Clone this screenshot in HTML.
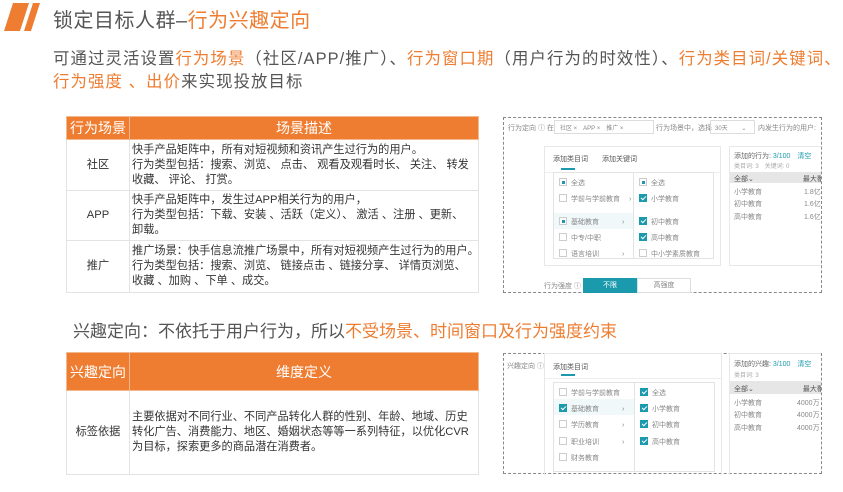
<!DOCTYPE html>
<html><head><meta charset="utf-8"><style>
*{margin:0;padding:0;box-sizing:border-box}
body{width:843px;height:492px;background:#fff;position:relative;overflow:hidden;font-family:"Liberation Sans","Noto Sans CJK SC",sans-serif;color:#555}
.a{position:absolute;white-space:nowrap}
.o{color:#ee7d31}
table{border-collapse:collapse;position:absolute;font-size:11.2px;color:#333;table-layout:fixed}
td{border:1px solid #e3e3e3;line-height:15px;white-space:nowrap;overflow:hidden;padding:0}
th{background:#ef7d31;color:#fff;font-weight:normal;font-size:14px;border:1px solid #f3b88d;white-space:nowrap;padding:0}
.box{position:absolute;border:1px dashed #888;font-size:7px;color:#888}
.cb{position:absolute;width:8px;height:8px;border:1px solid #ccc;background:#fff}
.ck{background:#1a9aac;border-color:#1a9aac}
.ck::after{content:"";position:absolute;left:2px;top:0px;width:2px;height:4px;border:solid #fff;border-width:0 1px 1px 0;transform:rotate(45deg)}
.hf{border-color:#ccc}
.hf::after{content:"";position:absolute;left:2px;top:2px;width:3px;height:3px;background:#1a9aac}
</style></head><body>
<svg class="a" style="left:0;top:0" width="50" height="36"><polygon points="13,3 29,3 20,31 4,31" fill="#ef7d31"/><polygon points="33,3 40,3 31,31 24,31" fill="#ef7d31"/></svg>
<div class="a" style="left:53px;top:4px;font-size:20px;color:#555;letter-spacing:0.5px">锁定目标人群–<span class="o">行为兴趣定向</span></div>
<div class="a" style="left:53px;top:48px;font-size:16.4px;line-height:23px;letter-spacing:1.1px">可通过灵活设置<span class="o">行为场景</span>（社区/APP/推广）、<span class="o">行为窗口期</span>（用户行为的时效性）、<span class="o">行为类目词/关键词、</span><br><span class="o">行为强度 、出价</span>来实现投放目标</div>

<table style="left:66px;top:116px;width:412px">
<colgroup><col style="width:63px"><col style="width:349px"></colgroup>
<tr style="height:23px"><th>行为场景</th><th>场景描述</th></tr>
<tr style="height:51px"><td style="text-align:center">社区</td><td style="padding-left:2px">快手产品矩阵中，所有对短视频和资讯产生过行为的用户。<br>行为类型包括：搜索、浏览、 点击、 观看及观看时长、 关注、 转发<br>收藏、 评论、 打赏。</td></tr>
<tr style="height:50px"><td style="text-align:center">APP</td><td style="padding-left:2px">快手产品矩阵中，发生过APP相关行为的用户，<br>行为类型包括：下载、安装 、活跃（定义）、 激活 、注册 、更新、<br>卸载。</td></tr>
<tr style="height:52px"><td style="text-align:center">推广</td><td style="padding-left:2px">推广场景：快手信息流推广场景中，所有对短视频产生过行为的用户。<br>行为类型包括：搜索、浏览、 链接点击 、链接分享、 详情页浏览、<br>收藏 、加购 、下单 、成交。</td></tr>
</table>

<div class="a" style="left:73px;top:317px;font-size:17px">兴趣定向：不依托于用户行为，所以<span class="o">不受场景、时间窗口及行为强度约束</span></div>

<table style="left:66px;top:352px;width:412px">
<colgroup><col style="width:63px"><col style="width:349px"></colgroup>
<tr style="height:38px"><th>兴趣定向</th><th>维度定义</th></tr>
<tr style="height:84px"><td style="text-align:center">标签依据</td><td style="padding-left:2px">主要依据对不同行业、不同产品转化人群的性别、年龄、地域、历史<br>转化广告、消费能力、地区、婚姻状态等等一系列特征，以优化CVR<br>为目标，探索更多的商品潜在消费者。</td></tr>
</table>

<!-- box1 -->
<div class="box" style="left:503px;top:117px;width:319px;height:176px">
 <div class="a" style="left:4px;top:5px">行为定向 ⓘ 在</div>
 <div class="a" style="left:50px;top:2px;width:100px;height:14px;border:1px solid #ddd;padding:2px 5px;font-size:6px">社区 ×　APP ×　推广 ×</div>
 <div class="a" style="left:152px;top:5px">行为场景中，选择</div>
 <div class="a" style="left:206px;top:2px;width:45px;height:14px;border:1px solid #ddd;padding:2px 4px;font-size:6px">30天 　　⌄</div>
 <div class="a" style="left:254px;top:5px">内发生行为的用户:</div>
 <div class="a" style="left:40px;top:28px;width:177px;height:120px;border:1px solid #e8e8e8">
  <div class="a" style="left:8px;top:7px;color:#555">添加类目词　　添加关键词</div>
  <div class="a" style="left:16px;top:21px;width:14px;height:2px;background:#1a9aac"></div>
  <div class="a" style="left:0;top:25px;width:175px;border-top:1px solid #eee"></div>
  <div class="a" style="left:8px;top:25px;width:161px;height:87px;border:1px solid #e3e3e3">
   <div class="a" style="left:79px;top:0;height:85px;border-left:1px solid #e3e3e3"></div>
   <div class="a" style="left:0;top:40px;width:79px;height:16px;background:#f0f8f9"></div>
   <div class="cb hf" style="left:5px;top:5px"></div><div class="a" style="left:17px;top:5px">全选</div>
   <div class="cb" style="left:5px;top:21px"></div><div class="a" style="left:17px;top:21px">学前与学前教育　 ›</div>
   <div class="cb hf" style="left:5px;top:44px"></div><div class="a" style="left:17px;top:44px">基础教育　　　 ›</div>
   <div class="cb" style="left:5px;top:60px"></div><div class="a" style="left:17px;top:60px">中专/中职</div>
   <div class="cb" style="left:5px;top:76px"></div><div class="a" style="left:17px;top:76px">语言培训　　　 ›</div>
   <div class="cb hf" style="left:85px;top:5px"></div><div class="a" style="left:97px;top:5px">全选</div>
   <div class="cb ck" style="left:85px;top:21px"></div><div class="a" style="left:97px;top:21px">小学教育</div>
   <div class="cb ck" style="left:85px;top:44px"></div><div class="a" style="left:97px;top:44px">初中教育</div>
   <div class="cb ck" style="left:85px;top:60px"></div><div class="a" style="left:97px;top:60px">高中教育</div>
   <div class="cb" style="left:85px;top:76px"></div><div class="a" style="left:97px;top:76px">中小学素质教育</div>
  </div>
 </div>
 <div class="a" style="left:225px;top:28px;width:92px;height:120px;border:1px solid #e8e8e8;border-right:none;overflow:hidden">
  <div class="a" style="left:4px;top:4px;color:#666">添加的行为: <span style="color:#1a9aac">3/100　清空</span></div>
  <div class="a" style="left:4px;top:14px;font-size:6px;color:#aaa">类目词: 3　关键词: 0</div>
  <div class="a" style="left:0;top:25px;width:92px;height:11px;background:#e6e6e6;color:#555;padding:2px 4px">全部⌄　　　　　　　最大覆</div>
  <div class="a" style="left:4px;top:40px">小学教育　　　　　　1.8亿</div>
  <div class="a" style="left:4px;top:52px">初中教育　　　　　　1.6亿</div>
  <div class="a" style="left:4px;top:65px">高中教育　　　　　　1.6亿</div>
 </div>
 <div class="a" style="left:40px;top:163px">行为强度 ⓘ</div>
 <div class="a" style="left:79px;top:160px;width:54px;height:15px;background:#1a9aac;color:#fff;text-align:center;line-height:15px">不限</div>
 <div class="a" style="left:133px;top:160px;width:54px;height:15px;border:1px solid #ddd;text-align:center;line-height:13px">高强度</div>
</div>

<!-- box2 -->
<div class="box" style="left:503px;top:353px;width:319px;height:121px">
 <div class="a" style="left:3px;top:7px">兴趣定向 ⓘ</div>
 <div class="a" style="left:40px;top:-1px;width:178px;height:122px;border:1px solid #e8e8e8;border-bottom:none">
  <div class="a" style="left:8px;top:8px;color:#555">添加类目词</div>
  <div class="a" style="left:16px;top:20px;width:14px;height:2px;background:#1a9aac"></div>
  <div class="a" style="left:0;top:24px;width:176px;border-top:1px solid #eee"></div>
  <div class="a" style="left:8px;top:28px;width:162px;height:90px;border:1px solid #e3e3e3">
   <div class="a" style="left:80px;top:0;height:88px;border-left:1px solid #e3e3e3"></div>
   <div class="a" style="left:0;top:16px;width:80px;height:16px;background:#f0f8f9"></div>
   <div class="cb" style="left:5px;top:5px"></div><div class="a" style="left:17px;top:5px">学前与学前教育</div>
   <div class="cb ck" style="left:5px;top:21px"></div><div class="a" style="left:17px;top:21px">基础教育　　　 ›</div>
   <div class="cb" style="left:5px;top:37px"></div><div class="a" style="left:17px;top:37px">学历教育　　　 ›</div>
   <div class="cb" style="left:5px;top:54px"></div><div class="a" style="left:17px;top:54px">职业培训　　　 ›</div>
   <div class="cb" style="left:5px;top:70px"></div><div class="a" style="left:17px;top:70px">财务教育</div>
   <div class="cb ck" style="left:86px;top:5px"></div><div class="a" style="left:98px;top:5px">全选</div>
   <div class="cb ck" style="left:86px;top:21px"></div><div class="a" style="left:98px;top:21px">小学教育</div>
   <div class="cb ck" style="left:86px;top:37px"></div><div class="a" style="left:98px;top:37px">初中教育</div>
   <div class="cb ck" style="left:86px;top:54px"></div><div class="a" style="left:98px;top:54px">高中教育</div>
  </div>
 </div>
 <div class="a" style="left:225px;top:-1px;width:92px;height:122px;border:1px solid #e8e8e8;border-right:none;border-bottom:none;overflow:hidden">
  <div class="a" style="left:4px;top:5px;color:#666">添加的兴趣: <span style="color:#1a9aac">3/100　清空</span></div>
  <div class="a" style="left:4px;top:16px;font-size:6px;color:#aaa">类目词: 3</div>
  <div class="a" style="left:0;top:27px;width:92px;height:13px;background:#e6e6e6;color:#555;padding:3px 4px">全部⌄　　　　　　　最大覆</div>
  <div class="a" style="left:4px;top:44px">小学教育　　　　　4000万</div>
  <div class="a" style="left:4px;top:56px">初中教育　　　　　4000万</div>
  <div class="a" style="left:4px;top:69px">高中教育　　　　　4000万</div>
 </div>
</div>
</body></html>
